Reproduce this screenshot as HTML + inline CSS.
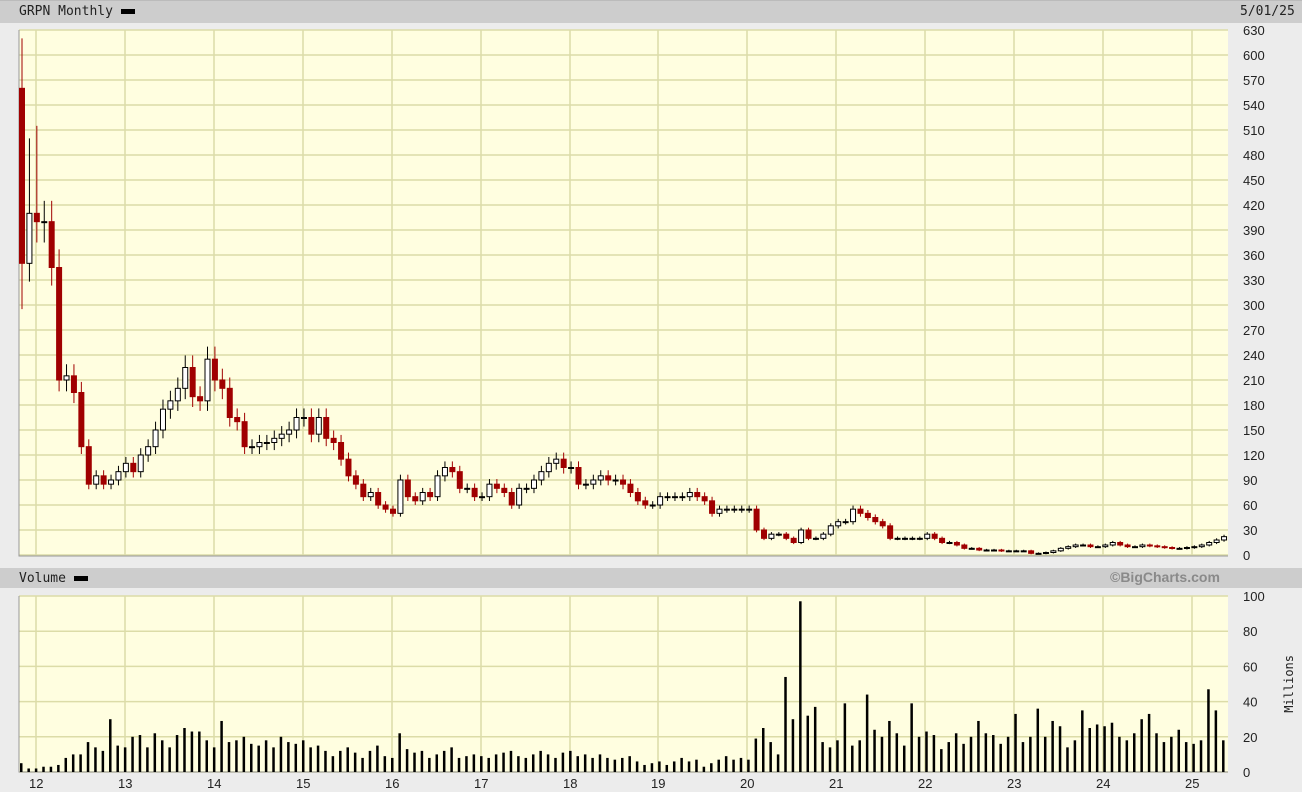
<!DOCTYPE html><html><head><meta charset="utf-8"><style>
body{margin:0;width:1302px;height:792px;background:#ececec;font-family:"DejaVu Sans Mono","Liberation Mono",monospace;overflow:hidden;position:relative}
.t{position:absolute;font-size:13px;color:#222}
</style></head><body>
<div style="position:absolute;left:0;top:0;width:1302px;height:22px;background:#cdcdcd;border-top:1px solid #bbb"></div>
<div class="t" style="left:19px;top:4px">GRPN Monthly <span style="display:inline-block;width:14px;height:5px;background:#000;vertical-align:middle"></span></div>
<div class="t" style="left:1240px;top:4px">5/01/25</div>
<div style="position:absolute;left:0;top:568px;width:1302px;height:20px;background:#cdcdcd"></div>
<div class="t" style="left:19px;top:571px">Volume <span style="display:inline-block;width:14px;height:5px;background:#000;vertical-align:middle"></span></div>
<div style="position:absolute;left:1110px;top:569px;font:bold 14px 'Liberation Sans',sans-serif;color:#8a8a8a">©BigCharts.com</div>
<svg id="s" width="1302" height="792" style="position:absolute;left:0;top:0;font-family:'Liberation Sans',sans-serif"></svg>
<div class="t" style="left:1282px;top:655px;writing-mode:vertical-rl;transform:rotate(180deg);font-size:12px">Millions</div>
<script>
var s=document.getElementById('s'),h='';
var X0=19,X1=1228,PT=30,PB=555,VT=596,VB=772;
h+='<rect x="'+X0+'" y="'+PT+'" width="'+(X1-X0)+'" height="'+(PB-PT+1)+'" fill="#fffee0"/>';
h+='<rect x="'+X0+'" y="'+VT+'" width="'+(X1-X0)+'" height="'+(VB-VT)+'" fill="#fffee0"/>';
var yrs=[36,125,214,303,392,481,570,658,747,836,925,1014,1103,1192];
for(var i=0;i<=21;i++){var y=PT+i*25;h+='<line x1="'+X0+'" x2="'+X1+'" y1="'+y+'" y2="'+y+'" stroke="#dcdca8" stroke-width="1.5"/>';h+='<text x="1243" y="'+(y+5)+'" font-size="13" fill="#222">'+(630-30*i)+'</text>';}
for(var i=0;i<=5;i++){var y=VT+i*35.2;h+='<line x1="'+X0+'" x2="'+X1+'" y1="'+y+'" y2="'+y+'" stroke="#dcdca8" stroke-width="1.5"/>';h+='<text x="1243" y="'+(y+5)+'" font-size="13" fill="#222">'+(100-20*i)+'</text>';}
yrs.forEach(function(x,i){h+='<line x1="'+x+'" x2="'+x+'" y1="'+PT+'" y2="'+PB+'" stroke="#dcdca8" stroke-width="1.5"/><line x1="'+x+'" x2="'+x+'" y1="'+VT+'" y2="'+VB+'" stroke="#dcdca8" stroke-width="1.5"/>';h+='<text x="'+(x-7)+'" y="788" font-size="13" fill="#222">'+(12+i)+'</text>';});
h+='<path d="M'+X0+' '+PT+'V'+(PB+1)+'H'+X1+'" stroke="#999" fill="none"/><path d="M'+X0+' '+VT+'V'+VB+'H'+X1+'" stroke="#999" fill="none"/>';
var c=[350,410,400,400,345,210,215,195,130,85,95,85,90,100,110,100,120,130,150,175,185,200,225,190,185,235,210,200,165,160,130,130,135,135,140,145,150,165,165,145,165,140,135,115,95,85,70,75,60,55,50,90,70,65,75,70,95,105,100,80,80,70,70,85,80,75,60,80,80,90,100,110,115,105,105,85,85,90,95,90,90,85,75,65,60,60,70,70,70,70,75,70,65,50,55,55,55,55,55,30,20,25,25,20,15,30,20,20,25,35,40,40,55,50,45,40,35,20,20,20,20,20,25,20,15,15,12,8,8,6,6,6,5,5,5,5,2,2,3,5,8,10,12,12,10,10,12,15,12,10,10,12,11,10,9,8,8,9,10,12,15,18,22];
var v=[5,2,2,3,3,4,8,10,10,17,14,12,30,15,14,20,21,14,22,18,14,21,25,23,23,18,14,29,17,18,20,16,15,18,14,20,17,16,18,14,15,12,9,12,14,11,8,12,15,9,8,22,13,11,12,8,10,12,14,8,9,10,9,8,10,11,12,9,8,10,12,10,8,11,12,9,10,8,10,8,7,8,9,6,4,5,6,4,6,8,6,7,3,5,7,9,7,8,7,19,25,17,10,54,30,97,32,37,17,14,18,39,15,18,44,24,20,29,22,15,39,20,23,21,13,17,22,16,20,29,22,21,16,20,33,17,20,36,20,29,26,14,18,35,25,27,26,28,20,18,22,30,33,22,17,20,24,17,16,18,47,35,18];
function py(p){return PB-p*525/630;}
var dx=7.42,o=560;
for(var i=0;i<c.length;i++){var x=22+i*dx,cl=c[i],op=i==0?560:o,hi=Math.max(op,cl)*1.06+1,lo=Math.min(op,cl)*0.94-1;if(i==0){hi=620;lo=295;}if(i==2){hi=515}if(i==1){hi=500}
var up=cl>=op,col=up?'#000':'#a00000';
h+='<line x1="'+x+'" x2="'+x+'" y1="'+py(hi)+'" y2="'+py(lo)+'" stroke="'+col+'"/>';
var t=py(Math.max(op,cl)),b=py(Math.min(op,cl));if(b-t<1)b=t+1;
h+='<rect x="'+(x-2.5)+'" y="'+t+'" width="5" height="'+(b-t)+'" fill="'+(up?'#fff':'#a00000')+'" stroke="'+col+'"/>';
o=cl;}
for(var i=0;i<v.length;i++){var x=21+i*dx;h+='<rect x="'+(x-1)+'" y="'+(VB-v[i]*1.76)+'" width="2.5" height="'+(v[i]*1.76)+'" fill="#000"/>';}
s.innerHTML=h;
</script>
</body></html>
